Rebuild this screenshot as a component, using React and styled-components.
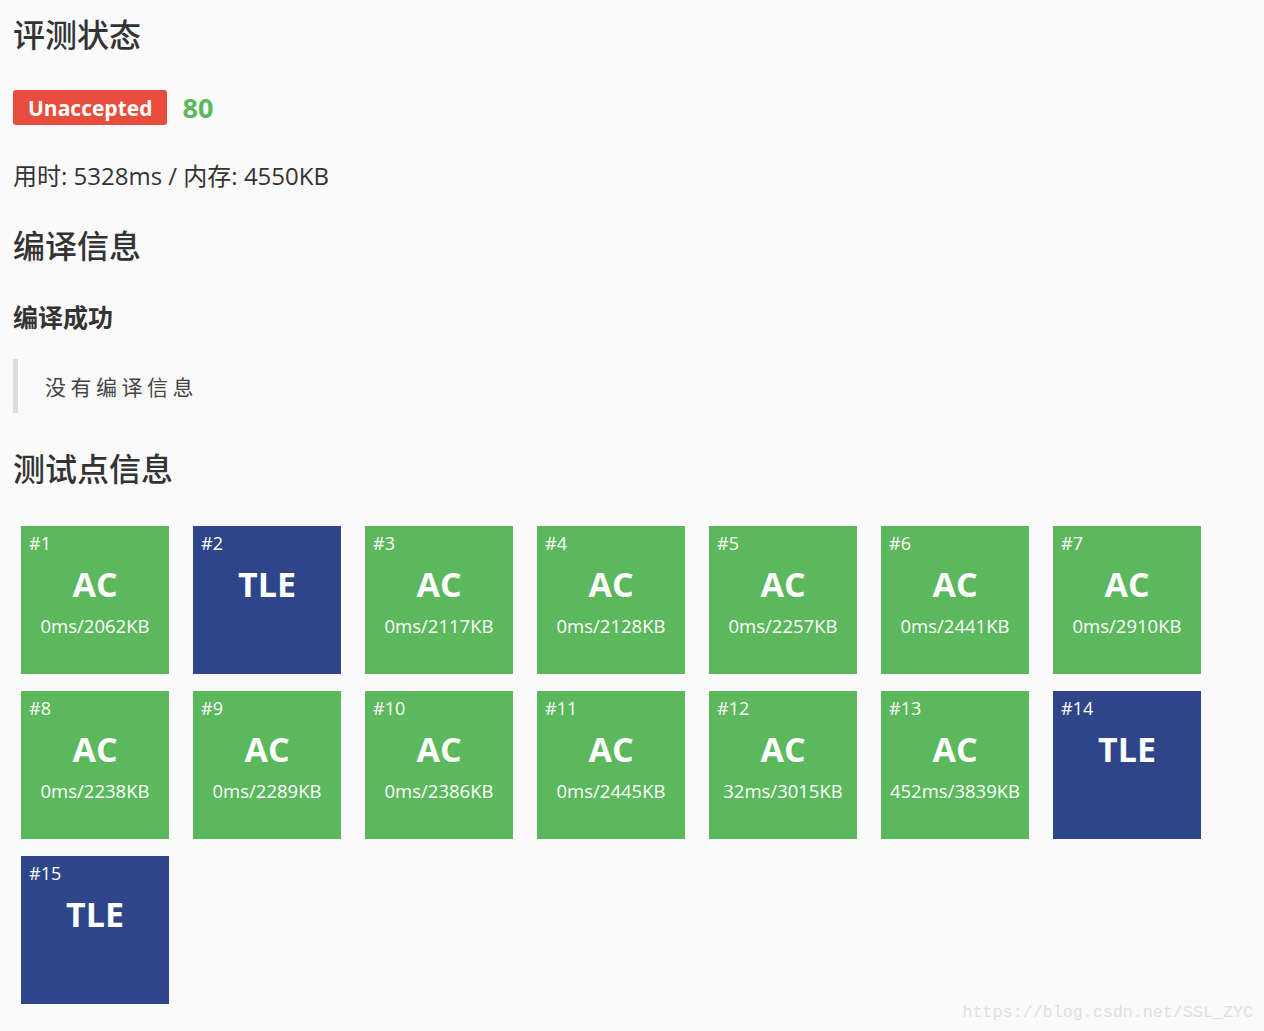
import React from "react";
import styled, { createGlobalStyle } from "styled-components";

const Global = createGlobalStyle`
  html, body { margin: 0; padding: 0; background: #fafafa; }
  body { font-family: "Open Sans", "Noto Sans CJK SC", sans-serif; color: #333; }
`;

const Page = styled.div`
  position: relative;
  min-height: 1031px;
  padding: 12px 13px 0 13px;
  box-sizing: border-box;
`;

const Heading = styled.h2`
  margin: ${p => p.$mt || 0}px 0 0 0;
  font-size: 32px;
  font-weight: 500;
  line-height: 42px;
  color: #333;
  font-family: "Noto Sans CJK SC", sans-serif;
`;

const StatusRow = styled.div`
  display: flex;
  align-items: center;
  gap: 15px;
  margin: 35px 0 0 0;
`;

const Badge = styled.span`
  display: inline-flex;
  align-items: center;
  height: 35px;
  padding: 0 15px 0 15px;
  background: #e74c3c;
  border-radius: 3px;
  color: #fff;
  font-weight: 700;
  font-size: 21px;
  font-family: "Open Sans", sans-serif;
`;

const Score = styled.span`
  color: #5cb85c;
  font-weight: 700;
  font-size: 27px;
  font-family: "Open Sans", sans-serif;
`;

const Usage = styled.p`
  margin: 34px 0 0 0;
  font-size: 24px;
  line-height: 32px;
  color: #333;
`;

const SubHeading = styled.h3`
  margin: 34px 0 0 0;
  font-size: 25px;
  font-weight: 700;
  line-height: 34px;
  color: #333;
  font-family: "Noto Sans CJK SC", sans-serif;
`;

const Quote = styled.blockquote`
  margin: 26px 0 33px 0;
  border-left: 5px solid #ddd;
  height: 54px;
  display: flex;
  align-items: center;
  padding-left: 27px;
  font-size: 21px;
  letter-spacing: 4.5px;
  color: #444;
  font-family: "Noto Sans CJK SC", serif;
  font-weight: 400;
`;

const Grid = styled.div`
  display: grid;
  grid-template-columns: repeat(7, 148px);
  column-gap: 24px;
  row-gap: 17px;
  padding-left: 8px;
  margin-top: 38px;
`;

const Tile = styled.div`
  width: 148px;
  height: 148px;
  background: ${p => (p.$ok ? "#5cb85c" : "#2e4689")};
  color: #fff;
  position: relative;
  display: flex;
  flex-direction: column;
  align-items: center;
  box-sizing: border-box;
  padding-top: 37px;
`;

const TileNo = styled.span`
  position: absolute;
  left: 8px;
  top: 5px;
  font-size: 18px;
  line-height: 24px;
`;

const Verdict = styled.span`
  font-size: 34px;
  font-weight: 700;
  line-height: 42px;
`;

const Stats = styled.span`
  margin-top: 8px;
  font-size: 18.5px;
  line-height: 26px;
`;

const Watermark = styled.div`
  position: absolute;
  right: 11px;
  bottom: 9px;
  font-family: "Liberation Mono", "DejaVu Sans Mono", monospace;
  font-size: 16.7px;
  color: #e0e0e0;
`;

const cases = [
  ["AC", "0ms/2062KB"],
  ["TLE", ""],
  ["AC", "0ms/2117KB"],
  ["AC", "0ms/2128KB"],
  ["AC", "0ms/2257KB"],
  ["AC", "0ms/2441KB"],
  ["AC", "0ms/2910KB"],
  ["AC", "0ms/2238KB"],
  ["AC", "0ms/2289KB"],
  ["AC", "0ms/2386KB"],
  ["AC", "0ms/2445KB"],
  ["AC", "32ms/3015KB"],
  ["AC", "452ms/3839KB"],
  ["TLE", ""],
  ["TLE", ""],
];

export default function App() {
  return (
    <Page>
      <Global />
      <Heading>评测状态</Heading>
      <StatusRow>
        <Badge>Unaccepted</Badge>
        <Score>80</Score>
      </StatusRow>
      <Usage>用时: 5328ms / 内存: 4550KB</Usage>
      <Heading $mt={31}>编译信息</Heading>
      <SubHeading>编译成功</SubHeading>
      <Quote>没有编译信息</Quote>
      <Heading>测试点信息</Heading>
      <Grid>
        {cases.map(([v, s], i) => (
          <Tile key={i} $ok={v === "AC"}>
            <TileNo>#{i + 1}</TileNo>
            <Verdict>{v}</Verdict>
            {s && <Stats>{s}</Stats>}
          </Tile>
        ))}
      </Grid>
      <Watermark>https://blog.csdn.net/SSL_ZYC</Watermark>
    </Page>
  );
}
